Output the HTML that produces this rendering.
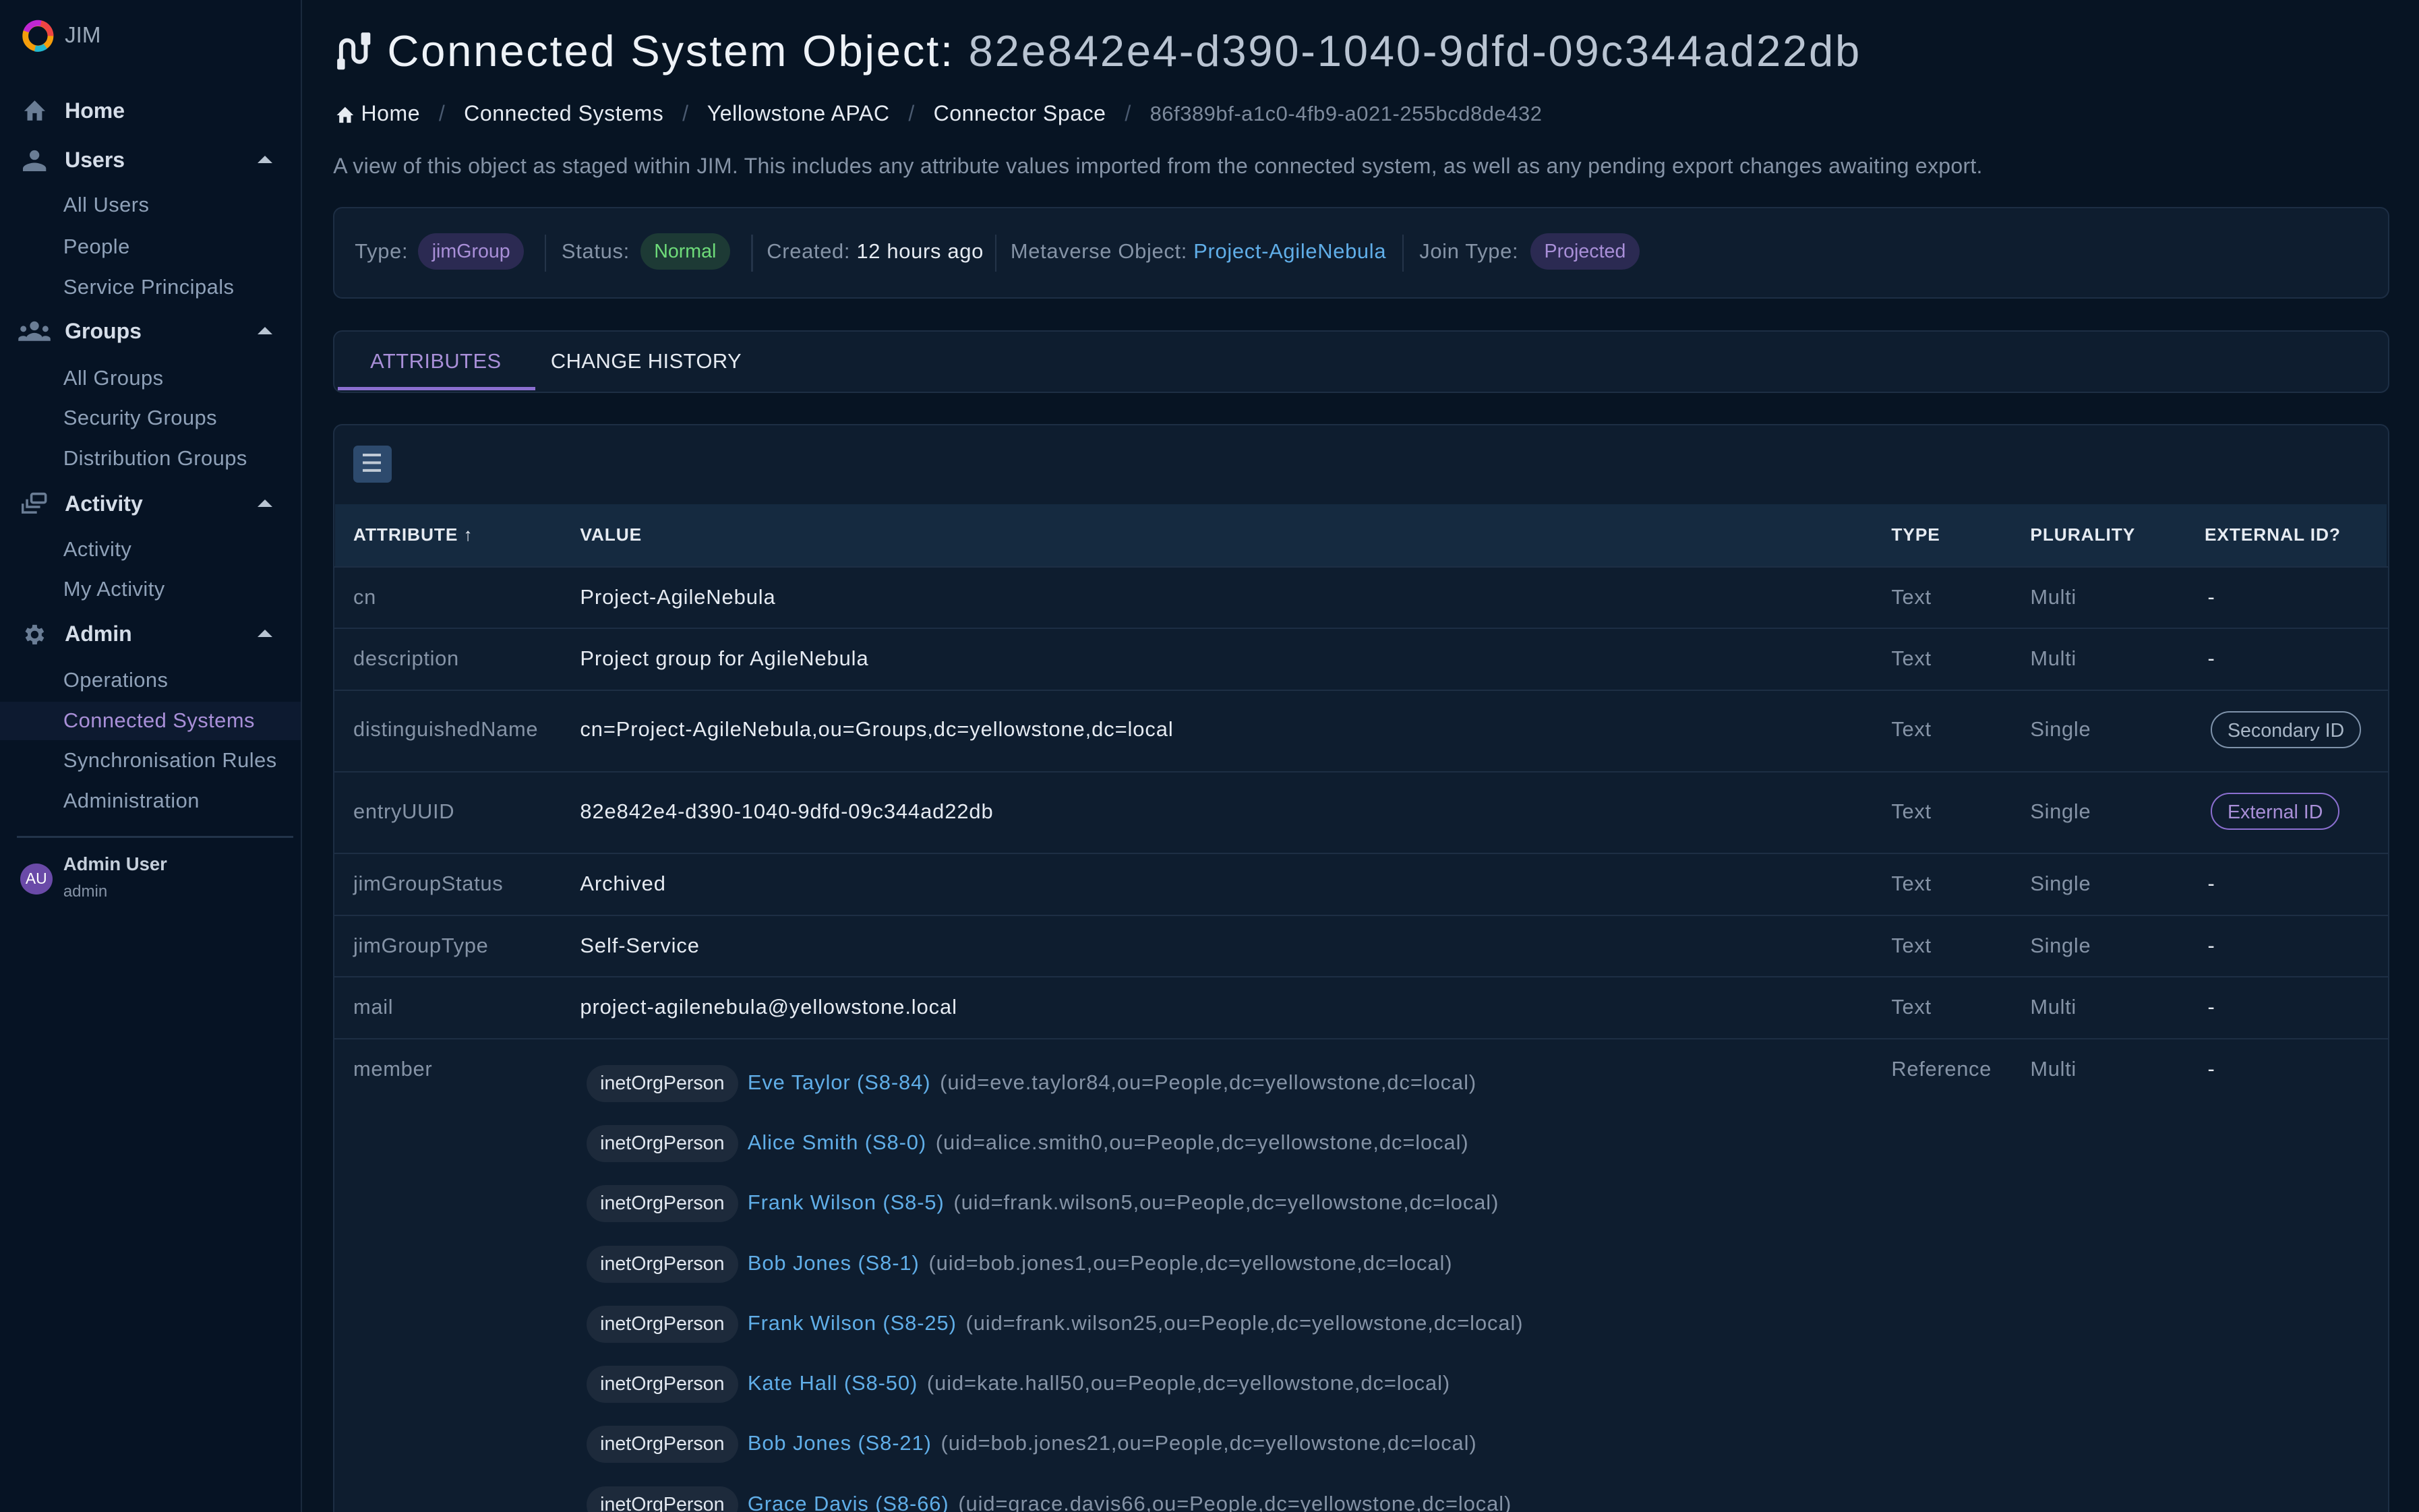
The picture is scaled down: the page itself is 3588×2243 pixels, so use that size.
<!DOCTYPE html>
<html><head><meta charset="utf-8"><style>
html{zoom:2.28827;height:980px;overflow:hidden}
body{margin:0;width:1568px;height:980px;overflow:hidden;background:#071423;font-family:"Liberation Sans",sans-serif;color:#e2e8f0;position:relative}
.t{position:absolute;white-space:nowrap;line-height:20px}
.sb{position:absolute;left:0;top:0;width:195px;height:980px;background:#061324;border-right:1px solid #1b2a3d}
.nh{font-weight:bold;font-size:14px;color:#d5dde8;left:42px}
.ns{font-size:13.5px;color:#8fa1b8;left:41px;letter-spacing:.2px}
.car{position:absolute;left:167px;width:0;height:0;border-left:5px solid transparent;border-right:5px solid transparent;border-bottom:5px solid #b8c4d2}
.card{position:absolute;left:216px;width:1331px;background:#0e1d2f;border:1px solid #1d2e44;border-radius:6px}
.m{color:#8593a6}
.chip{display:inline-block;border-radius:12px;padding:0 9px;height:24px;line-height:24px;font-size:12.5px}
.sep{position:absolute;top:152px;width:1px;height:24px;background:#243449}
.row{position:absolute;left:216px;width:1332px;border-top:1px solid #1d2e44}
.a{font-size:13.5px;color:#8593a6;left:229px;letter-spacing:.3px}
.v{font-size:13.5px;color:#e6ebf2;left:376px;letter-spacing:.4px}
.c3{font-size:13.5px;color:#8593a6;left:1226px;letter-spacing:.3px}
.c4{font-size:13.5px;color:#8593a6;left:1316px;letter-spacing:.3px}
.c5{font-size:13.5px;color:#e6ebf2;left:1431px}
.hd{font-size:11.5px;font-weight:bold;letter-spacing:.4px;color:#e6ebf2}
.mem{position:absolute;left:380px;white-space:nowrap;font-size:13.5px;line-height:24px;letter-spacing:.4px}
.mem .ip{display:inline-block;background:#1d2a3b;color:#e2e8f0;border-radius:12px;padding:0 9px;font-size:12.5px;margin-right:6px;letter-spacing:0}
.mem .ln{color:#60aee8}
.mem .dn{color:#8593a6;margin-left:6px}
.ob{position:absolute;border-radius:13px;height:24px;line-height:24px;font-size:12.5px;padding:0 10px;box-sizing:border-box}
.inf{font-size:13.5px;color:#8593a6;letter-spacing:.3px}
</style></head><body>
<div class="sb"></div>
<svg style="position:absolute;left:13px;top:12px" width="23" height="23" viewBox="0 0 24 24"><circle cx="12" cy="12" r="8.5" fill="none" stroke="#f59e0b" stroke-width="4"/><path d="M4 9 A8.5 8.5 0 0 1 14 3.5" fill="none" stroke="#c026d3" stroke-width="4"/><path d="M14 3.5 A8.5 8.5 0 0 1 20.5 12" fill="none" stroke="#ef4444" stroke-width="4"/><path d="M10 20.5 A8.5 8.5 0 0 0 17 19" fill="none" stroke="#22b8cf" stroke-width="4"/></svg>
<div class="t" style="left:42px;top:13px;font-size:14.5px;color:#9aa8b8">JIM</div>
<svg style="position:absolute;left:14px;top:64px" width="17" height="15" viewBox="0 0 24 22"><path d="M10 21v-7h4v7h5v-9h3L12 2 2 12h3v9z" fill="#6a7d95"/></svg>
<div class="t nh" style="top:62px">Home</div>
<svg style="position:absolute;left:15px;top:96px" width="15" height="15" viewBox="0 0 24 24"><circle cx="12" cy="7" r="5" fill="#6a7d95"/><path d="M0 24v-3c0-4 8-6 12-6s12 2 12 6v3z" fill="#6a7d95"/></svg>
<div class="t nh" style="top:94px">Users</div><div class="car" style="top:101px"></div>
<div class="t ns" style="top:123px">All Users</div>
<div class="t ns" style="top:150px">People</div>
<div class="t ns" style="top:176px">Service Principals</div>
<svg style="position:absolute;left:12px;top:208px" width="21" height="13" viewBox="0 0 32 20"><circle cx="16" cy="5" r="4.5" fill="#6a7d95"/><circle cx="5" cy="8" r="3" fill="#6a7d95"/><circle cx="27" cy="8" r="3" fill="#6a7d95"/><path d="M8 20v-3c0-3 5-5 8-5s8 2 8 5v3z M0 20v-2c0-2 3-3 5-3s3 1 3 1v4z M32 20v-2c0-2-3-3-5-3s-3 1-3 1v4z" fill="#6a7d95"/></svg>
<div class="t nh" style="top:205px">Groups</div><div class="car" style="top:212px"></div>
<div class="t ns" style="top:235px">All Groups</div>
<div class="t ns" style="top:261px">Security Groups</div>
<div class="t ns" style="top:287px">Distribution Groups</div>
<svg style="position:absolute;left:14px;top:319px" width="17" height="15" viewBox="0 0 24 20"><rect x="9" y="1" width="13" height="8" rx="1.5" fill="none" stroke="#6a7d95" stroke-width="2.2"/><path d="M5 6v7h12 M1 10v8h13" fill="none" stroke="#6a7d95" stroke-width="2.2"/></svg>
<div class="t nh" style="top:317px">Activity</div><div class="car" style="top:324px"></div>
<div class="t ns" style="top:346px">Activity</div>
<div class="t ns" style="top:372px">My Activity</div>
<svg style="position:absolute;left:14px;top:403px" width="17" height="17" viewBox="0 0 24 24"><path fill="#6a7d95" d="M19.4 13a7.5 7.5 0 0 0 0-2l2.1-1.6-2-3.5-2.5 1a7.6 7.6 0 0 0-1.7-1L15 3h-4l-.4 2.7a7.6 7.6 0 0 0-1.7 1l-2.5-1-2 3.5L6.6 11a7.5 7.5 0 0 0 0 2l-2.1 1.6 2 3.5 2.5-1a7.6 7.6 0 0 0 1.7 1L11 21h4l.4-2.7a7.6 7.6 0 0 0 1.7-1l2.5 1 2-3.5zM13 15.5a3.5 3.5 0 1 1 0-7 3.5 3.5 0 0 1 0 7z" transform="translate(-1 0)"/></svg>
<div class="t nh" style="top:401px">Admin</div><div class="car" style="top:408px"></div>
<div class="t ns" style="top:431px">Operations</div>
<div style="position:absolute;left:0;top:455px;width:195px;height:25px;background:#0d1a30"></div>
<div class="t ns" style="top:457px;color:#a98fd8">Connected Systems</div>
<div class="t ns" style="top:483px">Synchronisation Rules</div>
<div class="t ns" style="top:509px">Administration</div>
<div style="position:absolute;left:11px;top:542px;width:179px;height:1px;background:#22344a"></div>
<div style="position:absolute;left:13px;top:560px;width:21px;height:20px;border-radius:50%;background:#6a4aa8;color:#fff;font-size:10px;line-height:20px;text-align:center">AU</div>
<div class="t" style="left:41px;top:550px;font-size:12px;font-weight:bold;color:#c5cfdb">Admin User</div>
<div class="t" style="left:41px;top:568px;font-size:10.5px;color:#8593a6">admin</div>

<svg style="position:absolute;left:218px;top:20px" width="24" height="26" viewBox="0 0 24 26"><path d="M3 24V10a4 4 0 0 1 8 0v6a4 4 0 0 0 8 0V3" fill="none" stroke="#e6ebf2" stroke-width="2.6"/><rect x="0.5" y="18" width="5" height="7" rx="1" fill="#e6ebf2"/><rect x="16" y="1" width="6" height="8" rx="1" fill="#e6ebf2"/></svg>
<div class="t" style="left:251px;top:16px;font-size:28.5px;line-height:34px;color:#eef2f7;letter-spacing:1.2px">Connected System Object: <span style="color:#b9c4d2">82e842e4-d390-1040-9dfd-09c344ad22db</span></div>
<svg style="position:absolute;left:217px;top:68px" width="13" height="12" viewBox="0 0 24 22"><path d="M10 21v-7h4v7h5v-9h3L12 2 2 12h3v9z" fill="#e6ebf2"/></svg>
<div class="t" style="left:234px;top:64px;font-size:14px;color:#e6ebf2;letter-spacing:.25px">Home <span style="margin:0 8px;color:#4a5a70">/</span> Connected Systems <span style="margin:0 8px;color:#4a5a70">/</span> Yellowstone APAC <span style="margin:0 8px;color:#4a5a70">/</span> Connector Space <span style="margin:0 8px;color:#4a5a70">/</span> <span style="color:#7d8a9c;font-size:13.5px">86f389bf-a1c0-4fb9-a021-255bcd8de432</span></div>
<div class="t" style="left:216px;top:98px;font-size:14px;color:#8593a6;letter-spacing:.12px">A view of this object as staged within JIM. This includes any attribute values imported from the connected system, as well as any pending export changes awaiting export.</div>

<div class="card" style="top:134px;height:58px"></div>
<div class="t inf" style="left:230px;top:153px">Type:</div>
<div class="t chip" style="left:271px;top:151px;background:#2b2a52;color:#a98fd8;line-height:24px">jimGroup</div>
<div class="sep" style="left:353px"></div>
<div class="t inf" style="left:364px;top:153px">Status:</div>
<div class="t chip" style="left:415px;top:151px;background:#1d3a35;color:#6fdc7a;line-height:24px">Normal</div>
<div class="sep" style="left:487px"></div>
<div class="t inf" style="left:497px;top:153px">Created: <span style="color:#e6ebf2">12 hours ago</span></div>
<div class="sep" style="left:645px"></div>
<div class="t inf" style="left:655px;top:153px">Metaverse Object: <span style="color:#60aee8">Project-AgileNebula</span></div>
<div class="sep" style="left:909px"></div>
<div class="t inf" style="left:920px;top:153px">Join Type:</div>
<div class="t chip" style="left:992px;top:151px;background:#2b2a52;color:#a98fd8;line-height:24px">Projected</div>

<div class="card" style="top:214px;height:39px"></div>
<div class="t" style="left:240px;top:224px;font-size:13.5px;color:#a98fd8;letter-spacing:.2px">ATTRIBUTES</div>
<div style="position:absolute;left:219px;top:251px;width:128px;height:2px;background:#8b6fd0"></div>
<div class="t" style="left:357px;top:224px;font-size:13.5px;color:#e6ebf2;letter-spacing:.2px">CHANGE HISTORY</div>

<div class="card" style="top:275px;height:720px"></div>
<div style="position:absolute;left:229px;top:289px;width:25px;height:24px;background:#2d4a6d;border-radius:3px"></div>
<div style="position:absolute;left:235px;top:294px;width:12px;height:2px;background:#c0cad6;box-shadow:0 5px 0 #c0cad6,0 10px 0 #c0cad6"></div>
<div style="position:absolute;left:217px;top:327px;width:1330px;height:40px;background:#152a40"></div>
<div class="t hd" style="left:229px;top:337px">ATTRIBUTE &#8593;</div>
<div class="t hd" style="left:376px;top:337px">VALUE</div>
<div class="t hd" style="left:1226px;top:337px">TYPE</div>
<div class="t hd" style="left:1316px;top:337px">PLURALITY</div>
<div class="t hd" style="left:1429px;top:337px">EXTERNAL ID?</div>

<div class="row" style="top:367px"></div>
<div class="t a" style="top:377px">cn</div><div class="t v" style="top:377px">Project-AgileNebula</div><div class="t c3" style="top:377px">Text</div><div class="t c4" style="top:377px">Multi</div><div class="t c5" style="top:377px">-</div>
<div class="row" style="top:407px"></div>
<div class="t a" style="top:417px">description</div><div class="t v" style="top:417px">Project group for AgileNebula</div><div class="t c3" style="top:417px">Text</div><div class="t c4" style="top:417px">Multi</div><div class="t c5" style="top:417px">-</div>
<div class="row" style="top:447px"></div>
<div class="t a" style="top:463px">distinguishedName</div><div class="t v" style="top:463px">cn=Project-AgileNebula,ou=Groups,dc=yellowstone,dc=local</div><div class="t c3" style="top:463px">Text</div><div class="t c4" style="top:463px">Single</div>
<div class="ob" style="left:1433px;top:461px;border:1px solid #7f93ab;color:#a8b6c6">Secondary ID</div>
<div class="row" style="top:500px"></div>
<div class="t a" style="top:516px">entryUUID</div><div class="t v" style="top:516px">82e842e4-d390-1040-9dfd-09c344ad22db</div><div class="t c3" style="top:516px">Text</div><div class="t c4" style="top:516px">Single</div>
<div class="ob" style="left:1433px;top:514px;border:1px solid #8b6fd0;color:#a98fd8">External ID</div>
<div class="row" style="top:553px"></div>
<div class="t a" style="top:563px">jimGroupStatus</div><div class="t v" style="top:563px">Archived</div><div class="t c3" style="top:563px">Text</div><div class="t c4" style="top:563px">Single</div><div class="t c5" style="top:563px">-</div>
<div class="row" style="top:593px"></div>
<div class="t a" style="top:603px">jimGroupType</div><div class="t v" style="top:603px">Self-Service</div><div class="t c3" style="top:603px">Text</div><div class="t c4" style="top:603px">Single</div><div class="t c5" style="top:603px">-</div>
<div class="row" style="top:633px"></div>
<div class="t a" style="top:643px">mail</div><div class="t v" style="top:643px">project-agilenebula@yellowstone.local</div><div class="t c3" style="top:643px">Text</div><div class="t c4" style="top:643px">Multi</div><div class="t c5" style="top:643px">-</div>
<div class="row" style="top:673px"></div>
<div class="t a" style="top:683px">member</div><div class="t c3" style="top:683px">Reference</div><div class="t c4" style="top:683px">Multi</div><div class="t c5" style="top:683px">-</div>

<div class="mem" style="top:690px"><span class="ip">inetOrgPerson</span><span class="ln">Eve Taylor (S8-84)</span><span class="dn">(uid=eve.taylor84,ou=People,dc=yellowstone,dc=local)</span></div>
<div class="mem" style="top:729px"><span class="ip">inetOrgPerson</span><span class="ln">Alice Smith (S8-0)</span><span class="dn">(uid=alice.smith0,ou=People,dc=yellowstone,dc=local)</span></div>
<div class="mem" style="top:768px"><span class="ip">inetOrgPerson</span><span class="ln">Frank Wilson (S8-5)</span><span class="dn">(uid=frank.wilson5,ou=People,dc=yellowstone,dc=local)</span></div>
<div class="mem" style="top:807px"><span class="ip">inetOrgPerson</span><span class="ln">Bob Jones (S8-1)</span><span class="dn">(uid=bob.jones1,ou=People,dc=yellowstone,dc=local)</span></div>
<div class="mem" style="top:846px"><span class="ip">inetOrgPerson</span><span class="ln">Frank Wilson (S8-25)</span><span class="dn">(uid=frank.wilson25,ou=People,dc=yellowstone,dc=local)</span></div>
<div class="mem" style="top:885px"><span class="ip">inetOrgPerson</span><span class="ln">Kate Hall (S8-50)</span><span class="dn">(uid=kate.hall50,ou=People,dc=yellowstone,dc=local)</span></div>
<div class="mem" style="top:924px"><span class="ip">inetOrgPerson</span><span class="ln">Bob Jones (S8-21)</span><span class="dn">(uid=bob.jones21,ou=People,dc=yellowstone,dc=local)</span></div>
<div class="mem" style="top:963px"><span class="ip">inetOrgPerson</span><span class="ln">Grace Davis (S8-66)</span><span class="dn">(uid=grace.davis66,ou=People,dc=yellowstone,dc=local)</span></div>
</body></html>
